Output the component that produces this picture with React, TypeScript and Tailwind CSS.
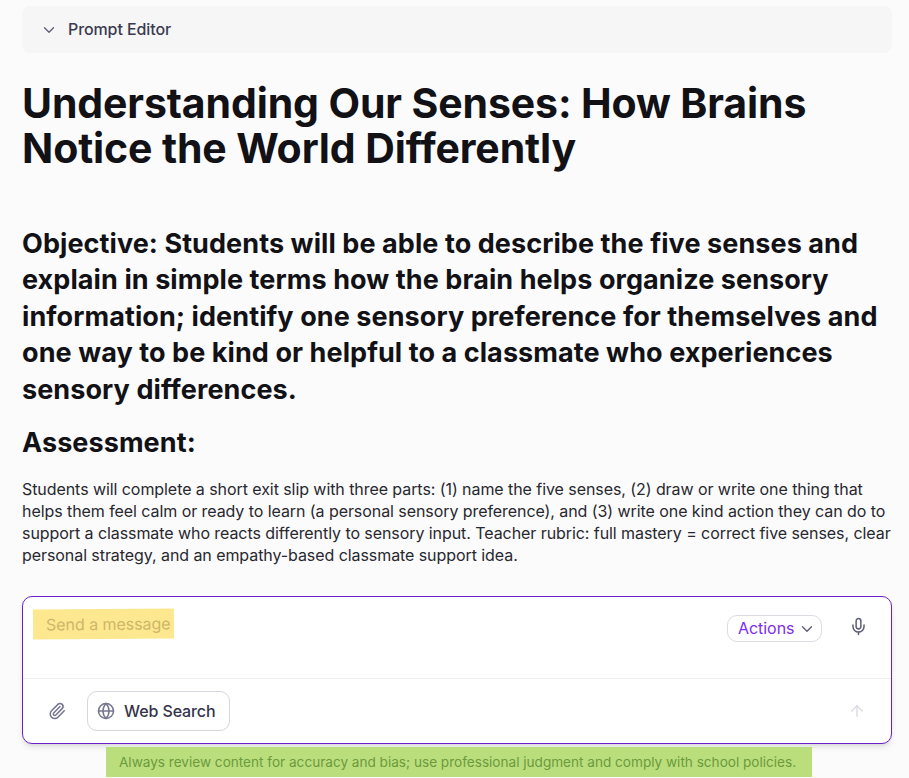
import { ChevronDown, Paperclip, Globe, Mic, ArrowUp } from "lucide-react";

export default function App() {
  return (
    <div className="relative h-[778px] w-[909px] overflow-hidden bg-[#fbfbfc] px-[22px] pt-[6px] font-['Inter',sans-serif] text-[#111116]">
      <div className="flex h-[47px] w-[870px] items-center rounded-lg bg-[#f6f6f7] pl-[18px]">
        <ChevronDown className="h-[18px] w-[18px] text-[#5f5f78]" strokeWidth={1.8} />
        <span className="mb-[2px] ml-[10px] text-[16px] tracking-[-0.1px] font-medium text-[#3b3b4f]">Prompt Editor</span>
      </div>

      <h1 className="mt-[28px] whitespace-nowrap text-[41px] leading-[45px] font-bold tracking-[-0.12px]">
        Understanding Our Senses: How Brains
        <br />
        Notice the World Differently
      </h1>

      <h2 className="mt-[55px] whitespace-nowrap text-[27px] leading-[36.4px] font-bold tracking-[0.08px]">
        Objective: Students will be able to describe the five senses and
        <br />
        explain in simple terms how the brain helps organize sensory
        <br />
        information; identify one sensory preference for themselves and
        <br />
        one way to be kind or helpful to a classmate who experiences
        <br />
        sensory differences.
      </h2>

      <h3 className="mt-[17px] text-[27px] leading-[36px] font-bold tracking-[0.08px]">Assessment:</h3>

      <p className="mt-[17px] whitespace-nowrap text-[16px] leading-[22px] tracking-[-0.07px] text-[#28282f]">
        Students will complete a short exit slip with three parts: (1) name the five senses, (2) draw or write one thing that
        <br />
        helps them feel calm or ready to learn (a personal sensory preference), and (3) write one kind action they can do to
        <br />
        support a classmate who reacts differently to sensory input. Teacher rubric: full mastery = correct five senses, clear
        <br />
        personal strategy, and an empathy-based classmate support idea.
      </p>

      <div className="mt-[30px] h-[148px] w-[870px] rounded-[10px] border border-[#6b21c8] bg-white shadow-md">
        <div className="flex h-[82px] items-start border-b border-[#eeeef0] pr-[23px]">
          <div className="relative ml-[10px] mt-[12px] flex h-[30px] w-[141px] -rotate-[0.5deg] items-center bg-[#fee88f] pl-[13px] text-[16px] tracking-[-0.05px] whitespace-nowrap text-[#cdb76a]">
            Send a message
          </div>
          <div className="ml-auto mt-[18px] flex h-[27px] w-[95px] items-center rounded-[10px] border border-[#dcdce2] pl-[10px] text-[16px] tracking-[-0.05px] text-[#7c2df0]">
            <span className="mb-[2px]">Actions</span>
            <ChevronDown className="ml-[4px] h-[18px] w-[18px] text-[#5f5f78]" strokeWidth={1.8} />
          </div>
          <Mic className="ml-[27px] mt-[20px] h-[19px] w-[19px] text-[#5f5f78]" strokeWidth={1.9} />
        </div>
        <div className="flex h-[64px] items-center pl-[25px] pr-[25px]">
          <Paperclip className="h-[18px] w-[18px] text-[#75758f]" strokeWidth={2} />
          <div className="ml-[21px] flex h-[40px] w-[143px] items-center rounded-[10px] border border-[#d6d6de] pl-[9px] text-[16px] tracking-[-0.1px] whitespace-nowrap font-medium text-[#34344a]">
            <Globe className="h-[18px] w-[18px] text-[#75758f]" strokeWidth={2} />
            <span className="ml-[9px]">Web Search</span>
          </div>
          <ArrowUp className="ml-auto h-[18px] w-[18px] text-[#dcdce6]" strokeWidth={2} />
        </div>
      </div>

      <div className="ml-[84px] mt-[3px] flex h-[30px] w-[706px] items-center whitespace-nowrap bg-[#bade7c] pl-[13px] text-[13.58px] text-[#6c9a3c]">
        Always review content for accuracy and bias; use professional judgment and comply with school policies.
      </div>
    </div>
  );
}
